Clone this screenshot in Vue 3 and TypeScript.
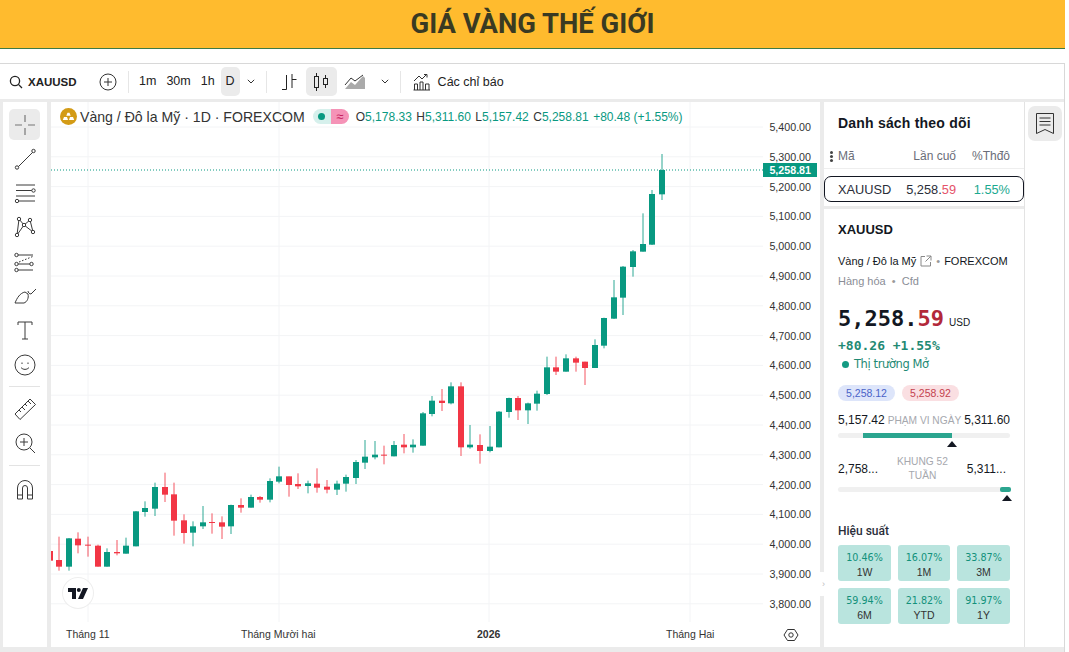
<template>
  <div class="page">
    <header class="banner"><h1>GIÁ VÀNG THẾ GIỚI</h1></header>

    <div class="widget">
      <!-- top toolbar -->
      <div class="toolbar">
        <div class="symbol">
          <svg width="14" height="14" viewBox="0 0 14 14" fill="none" stroke="#222" stroke-width="1.3">
            <circle cx="6" cy="6" r="4.6" /><path d="M9.4 9.4 13 13" />
          </svg>
          <span>XAUUSD</span>
        </div>
        <svg class="add" width="18" height="18" viewBox="0 0 18 18" fill="none" stroke="#333">
          <circle cx="9" cy="9" r="8" /><path d="M9 5v8M5 9h8" />
        </svg>
        <i class="sep first"></i>
        <span class="tf">1m</span>
        <span class="tf">30m</span>
        <span class="tf">1h</span>
        <span class="tf active">D</span>
        <svg class="chev" width="8" height="5" viewBox="0 0 8 5" fill="none" stroke="#333"><path d="M.8.8 4 4 7.2.8" /></svg>
        <i class="sep"></i>
        <svg class="bars" width="16" height="18" viewBox="0 0 16 18" fill="none" stroke="#222">
          <path d="M5.5 2v14.5M1 16.5h4.5M11 1v14M11 6.5h4.5" />
        </svg>
        <div class="tool-on">
          <svg width="16" height="18" viewBox="0 0 16 18" fill="none" stroke="#222">
            <rect x="1.5" y="3.5" width="4" height="11" /><path d="M3.5 0v3.5M3.5 14.5V18" />
            <rect x="10.5" y="5.5" width="4" height="6" /><path d="M12.5 2v3.5M12.5 11.5V15" />
          </svg>
        </div>
        <svg class="area" width="22" height="16" viewBox="0 0 22 16" fill="none" stroke="#333">
          <path d="M1 15 7 8l4 3 8-9 2 2v11H1Z" fill="#aaa" stroke="none" />
          <path d="M1 11 7 4l4 3 8-6" />
        </svg>
        <svg class="chev wide" width="8" height="5" viewBox="0 0 8 5" fill="none" stroke="#333"><path d="M.8.8 4 4 7.2.8" /></svg>
        <i class="sep last"></i>
        <svg class="ind" width="18" height="18" viewBox="0 0 18 18" fill="none" stroke="#333">
          <path d="M1 8 6 3l3 3 4-4" /><path d="M11 1.5h3v3" />
          <path d="M1.5 17v-6h3v6M7 17V9h3v8M12.500 17v-6h3.500v6M.5 17h16.500" />
        </svg>
        <span class="ind-label">Các chỉ báo</span>
      </div>

      <div class="body">
        <!-- drawing tools -->
        <aside class="tools">
          <div class="tool selected">
            <svg width="24" height="24" viewBox="0 0 24 24" fill="none" stroke="#777" stroke-width="1.2">
              <path d="M12 2v7M12 15v7M2 12h7M15 12h7" />
            </svg>
          </div>
          <div v-for="(t, i) in tools" :key="i" class="tool" :class="t.cls">
            <svg width="24" height="24" viewBox="0 0 24 24" fill="none" stroke="#3a3a3a" stroke-width="1">
              <path :d="t.d" />
              <circle v-for="(c, j) in t.dots" :key="j" :cx="c[0]" :cy="c[1]" r="1.700" fill="#fff" />
            </svg>
          </div>
        </aside>

        <!-- chart -->
        <main class="chart">
          <svg class="plot" viewBox="51 102 769 545" width="769" height="545">
            <g stroke="#f3f4f6">
              <line v-for="l in levels" :key="l.label" x1="51" x2="763" :y1="l.y" :y2="l.y" />
              <line v-for="x in gridX" :key="x" :x1="x" :x2="x" y1="102" y2="622" />
            </g>
            <g v-for="c in candles" :key="c.x" :stroke="c.color" :fill="c.color">
              <line :x1="c.x" :x2="c.x" :y1="c.high" :y2="c.low" stroke-opacity="0.85" />
              <rect :x="c.x - 3" :y="c.top" width="6" :height="c.height" stroke="none" />
            </g>
            <line x1="51" x2="763" y1="170" y2="170" stroke="#089981" stroke-dasharray="1 2" />
            <text v-for="l in levels" :key="l.label" class="axis" x="811" :y="l.y + 4" text-anchor="end">{{ l.label }}</text>
            <rect x="763" y="163" width="54" height="14" fill="#089981" />
            <text class="axis tag" x="811" y="174" text-anchor="end">5,258.81</text>
            <text class="time" x="66" y="638">Tháng 11</text>
            <text class="time" x="241" y="638">Tháng Mười hai</text>
            <text class="time strong" x="477" y="638">2026</text>
            <text class="time" x="666" y="638">Tháng Hai</text>
            <path d="M787.500 629.500h7l3.500 5.500-3.500 5.500h-7l-3.500-5.500Z" fill="none" stroke="#333" />
            <circle cx="791" cy="635" r="2.200" fill="none" stroke="#333" />
          </svg>

          <div class="legend">
            <svg width="17" height="17" viewBox="0 0 17 17">
              <circle cx="8.500" cy="8.500" r="8.500" fill="#d39b16" />
              <path d="M6.300 7.800 7.500 4.800h2l1.200 3ZM2.800 12l1.200-3h3l1 3ZM9 12l1-3h3l1.200 3Z" fill="#fff" />
            </svg>
            <span class="legend-name">Vàng / Đô la Mỹ · 1D · FOREXCOM</span>
            <span class="status">
              <span class="status-open"><b></b></span>
              <span class="status-delay">≈</span>
            </span>
            <span class="ohlc">
              <span>O<em>5,178.33</em></span>
              <span>H<em>5,311.60</em></span>
              <span>L<em>5,157.42</em></span>
              <span>C<em>5,258.81</em></span>
              <em>+80.48 (+1.55%)</em>
            </span>
          </div>

          <div class="tv-logo">
            <svg width="20" height="11" viewBox="0 0 20 11" fill="#131722">
              <path d="M0 0h8v11H4V4H0Z" />
              <circle cx="10.800" cy="2" r="2" />
              <path d="M15 0h5l-5 11h-5Z" />
            </svg>
          </div>
        </main>

        <!-- watchlist and details -->
        <section class="side">
          <div class="watch">
            <h2>Danh sách theo dõi</h2>
            <div class="watch-head">
              <span class="dots"></span>
              <span class="col-sym">Mã</span>
              <span class="col-last">Lần cuố</span>
              <span class="col-chg">%Thđô</span>
            </div>
            <div class="watch-row">
              <span class="col-sym">XAUUSD</span>
              <span class="col-last">5,258.<span class="neg">59</span></span>
              <span class="col-chg pos">1.55%</span>
            </div>
          </div>

          <div class="detail">
            <h3>XAUUSD</h3>
            <p class="name">
              Vàng / Đô la Mỹ
              <svg width="12" height="12" viewBox="0 0 12 12" fill="none" stroke="#888">
                <path d="M5 1.500H1v9.500h9.500V7M6.500 1h4.500v4.500M11 1 5.500 6.500" />
              </svg>
              <span class="bullet">•</span> FOREXCOM
            </p>
            <p class="kind">Hàng hóa <span class="bullet">•</span> Cfd</p>
            <div class="price">5,258.<span>59</span><small>USD</small></div>
            <div class="change">+80.26 +1.55%</div>
            <div class="market"><b></b>Thị trường Mở</div>
            <div class="pills">
              <span class="bid">5,258.12</span>
              <span class="ask">5,258.92</span>
            </div>

            <div class="range">
              <span>5,157.42</span>
              <label>PHẠM VI NGÀY</label>
              <span>5,311.60</span>
            </div>
            <div class="bar">
              <i class="fill day"></i>
              <i class="mark day-mark"></i>
            </div>

            <div class="range year">
              <span>2,758...</span>
              <label>KHUNG 52 TUẦN</label>
              <span>5,311...</span>
            </div>
            <div class="bar">
              <i class="fill wk"></i>
              <i class="mark wk-mark"></i>
            </div>

            <h4>Hiệu suất</h4>
            <div class="perf">
              <div v-for="p in perf" :key="p.label" class="perf-card">
                <strong>{{ p.value }}</strong>
                <span>{{ p.label }}</span>
              </div>
            </div>
          </div>

          <button class="collapse" type="button" aria-label="collapse">›</button>
        </section>

        <aside class="strip">
          <div class="strip-btn">
            <svg width="20" height="23" viewBox="0 0 20 23" fill="none" stroke="#333">
              <path d="M1.500 1.500h17v20l-8.500-4-8.500 4Z" />
              <path d="M4.500 6h11M4.500 9.500h11M4.500 13h11" />
            </svg>
          </div>
        </aside>
      </div>
    </div>
  </div>
</template>

<script setup lang="ts">
type Row = [number, number, number, number, 0 | 1]

interface Tool {
  d: string
  dots?: number[][]
  cls?: string
}

const GREEN = '#089981'
const RED = '#f23645'
const STEP = 9.56
const FIRST_X = 49.8

// wick top, body top, body bottom, wick bottom, up — read off the chart in 3x crops
const part1: Row[] = [
  [333, 333, 362, 362, 0], [290, 360, 380, 392, 0], [294, 295, 380, 392, 1], [277, 296, 316, 340, 0],
  [290, 314, 317, 350, 0], [314, 317, 380, 380, 0], [325, 336, 380, 380, 1], [300, 336, 340, 346, 0],
  [293, 317, 341, 341, 1], [213, 214, 319, 319, 1], [184, 204, 216, 230, 1], [128, 141, 206, 228, 1],
  [98, 141, 164, 186, 0], [128, 163, 242, 287, 0], [223, 241, 279, 311, 0], [244, 259, 278, 319, 1],
  [198, 247, 259, 267, 1], [220, 246, 248, 281, 0], [229, 247, 260, 297, 0], [194, 195, 259, 282, 1],
  [175, 195, 203, 218, 0], [164, 171, 203, 203, 1], [168, 171, 179, 188, 0], [115, 123, 179, 187, 1]
]
const part2: Row[] = [
  [290, 319, 335, 340, 1], [320, 319, 345, 380, 0], [310, 342, 349, 357, 0],
  [332, 340, 348, 370, 1], [295, 341, 353, 368, 0], [330, 350, 359, 370, 0], [332, 341, 359, 375, 1],
  [314, 321, 341, 365, 1], [270, 276, 324, 342, 1], [210, 260, 278, 297, 1], [213, 254, 262, 268, 1],
  [227, 254, 257, 283, 0], [213, 225, 259, 259, 1], [192, 224, 232, 250, 0], [208, 224, 232, 248, 1],
  [126, 130, 227, 227, 1], [78, 92, 132, 139, 1], [57, 92, 99, 123, 0], [37, 49, 100, 103, 1],
  [37, 49, 232, 258, 0], [165, 224, 232, 236, 1], [193, 225, 243, 281, 0], [168, 230, 243, 247, 1],
  [123, 125, 232, 232, 1], [83, 84, 126, 143, 1], [78, 84, 121, 150, 0], [98, 100, 121, 162, 1],
  [62, 71, 101, 122, 1]
]
const part3: Row[] = [
  [650, 682, 762, 765, 1], [650, 682, 695, 705, 0], [643, 655, 695, 695, 1], [650, 655, 668, 695, 0],
  [665, 665, 684, 735, 0], [598, 615, 684, 684, 1], [533, 534, 617, 625, 1], [420, 472, 536, 537, 1],
  [378, 380, 473, 525, 1], [330, 334, 381, 410, 1], [220, 312, 335, 335, 1], [150, 162, 314, 315, 1],
  [42, 90, 163, 180, 1]
]

const rows = [
  ...part1.map((r) => ({ r, base: 440 })),
  ...part2.map((r) => ({ r, base: 370 })),
  ...part3.map((r) => ({ r, base: 140 }))
]

const candles = rows.map(({ r, base }, i) => {
  const at = (z: number) => base + z / 3
  return {
    x: Math.round(FIRST_X + i * STEP),
    high: at(r[0]),
    top: at(r[1]),
    height: Math.max((r[2] - r[1]) / 3, 1),
    low: at(r[3]),
    color: r[4] ? GREEN : RED
  }
})

const levels = Array.from({ length: 17 }, (_, i) => ({
  label: (5400 - i * 100).toLocaleString('en-US') + '.00',
  y: 127 + i * 29.8
}))

const gridX = [88, 279, 489, 690]

const tools: Tool[] = [
  { d: 'M5 20 20 5', dots: [[4, 20.500], [20.500, 4]] },
  { d: 'M3 4h19M3 9.500h16M3 15h19M6 20h16', dots: [[20.500, 9.500], [4, 20]] },
  {
    d: 'M4 20 6 4l5 6 6-5 3 12-9-7-7 10',
    dots: [[4, 20], [6, 4], [17, 5], [11, 10], [20, 17]]
  },
  {
    d: 'M5 5h15M5 14h12M5 20h15M6 12l1.500-.6M9 10.800l1.500-.6M12 9.600l1.500-.6M15 8.400l1.500-.6M18 7.200l1.500-.6',
    dots: [[3.500, 5], [3.500, 14], [3.500, 20], [18.500, 14]]
  },
  { d: 'M2 19h9c3-1 5-5 4-9l-3-2c-5 1-8 6-10 11ZM15 7c0 1.500 1.500 3 3 3l5-5' },
  { d: 'M5 7V4h14v3M12 4v17M9 21h6' },
  { d: 'M12 2a10 10 0 1 0 0 20 10 10 0 0 0 0-20ZM8 14.500c2 2.500 6 2.500 8 0M9 9.500v1.500M15 9.500v1.500', cls: 'after-gap' },
  { d: 'M2 17 17 2l5.500 5.500L7 22.500ZM6 13l2 2M9 10l3 3M12 7l2 2M15 4l3 3' },
  { d: 'M11 3a8 8 0 1 0 0 16 8 8 0 0 0 0-16ZM17 17l5 5M11 7v8M7 11h8' },
  {
    d: 'M4.500 22V11a7.500 7.500 0 0 1 15 0v11h-5V11a2.500 2.500 0 0 0-5 0v11ZM4.500 18h5M14.500 18h5',
    cls: 'magnet'
  }
]

const perf = [
  { value: '10.46%', label: '1W' },
  { value: '16.07%', label: '1M' },
  { value: '33.87%', label: '3M' },
  { value: '59.94%', label: '6M' },
  { value: '21.82%', label: 'YTD' },
  { value: '91.97%', label: '1Y' }
]
</script>

<style>
html, body {
  background: #fff;
}
</style>

<style scoped>
.page {
  width: 1065px;
  height: 652px;
  overflow: hidden;
  font-family: "Liberation Sans", Arial, sans-serif;
  color: #131722;
}

.banner {
  height: 48px;
  background: #ffbb2e;
  border-bottom: 1px solid #3f7a45;
  display: flex;
  align-items: center;
  justify-content: center;
}
.banner h1 {
  margin: 0;
  font-family: Roboto, "Liberation Sans", sans-serif;
  font-size: 27.400px;
  font-weight: 700;
  color: #3a3a22;
}

.widget {
  margin-top: 14px;
  height: 589px;
  background: #ebebeb;
  border-right: 1px solid #d8d8d8;
  display: flex;
  flex-direction: column;
}

.toolbar {
  height: 35px;
  background: #fff;
  border-top: 1px solid #d8d8d8;
  display: flex;
  align-items: center;
  font-size: 12.500px;
  color: #222;
  flex: none;
}
.symbol {
  display: flex;
  align-items: center;
  gap: 5px;
  margin-left: 9px;
  font-weight: 700;
  font-size: 11.500px;
  width: 90px;
}
.sep {
  width: 1px;
  height: 22px;
  background: #e6e6e6;
  margin: 0 9px;
}
.sep.first { margin: 0 5px 0 11px; }
.sep.last { margin: 0 7px; }
.tf {
  padding: 0 5px;
  line-height: 29px;
  height: 29px;
}
.tf.active {
  background: #ebebeb;
  border-radius: 5px;
  width: 19px;
  padding: 0;
  text-align: center;
  margin-left: 1px;
}
.chev { margin: 0 2px 0 7px; }
.chev.wide { margin: 0 4px 0 15px; }
.bars { margin-left: 5px; }
.tool-on {
  width: 31px;
  height: 29px;
  margin-left: 9px;
  background: #ebebeb;
  border-radius: 5px;
  display: flex;
  align-items: center;
  justify-content: center;
}
.area { margin-left: 7px; }
.ind { margin-left: 5px; }
.ind-label { margin-left: 7px; }

.body {
  flex: 1;
  min-height: 0;
  margin-top: 3px;
  display: flex;
  margin-left: 3px;
  height: 545px;
}

.tools {
  width: 44px;
  height: 545px;
  background: #fff;
  display: flex;
  flex-direction: column;
  align-items: center;
  flex: none;
  padding: 7px 1px 0 0;
  box-sizing: border-box;
}
.tool {
  width: 31px;
  height: 31px;
  margin-bottom: 3.300px;
  display: flex;
  align-items: center;
  justify-content: center;
  position: relative;
}
.tool.selected {
  background: #ebebeb;
  border-radius: 5px;
}
.tool.after-gap { margin-bottom: 13px; }
.tool.magnet { margin-top: 11.700px; }
.tool.magnet::before,
.tool.after-gap::after {
  content: "";
  position: absolute;
  left: 0;
  width: 31px;
  height: 1px;
  background: #e3e3e3;
}
.tool.magnet::before { top: -8px; }
.tool.after-gap::after { bottom: -7px; }

.chart {
  position: relative;
  width: 769px;
  height: 545px;
  margin-left: 4px;
  background: #fff;
  flex: none;
}
.plot { display: block; }
.axis {
  font: 10.700px "Liberation Sans", Arial, sans-serif;
  fill: #333;
}
.axis.tag {
  font-weight: 700;
  fill: #fff;
}
.time {
  font: 10.500px "Liberation Sans", Arial, sans-serif;
  fill: #333;
}
.time.strong {
  font-weight: 700;
}

.legend {
  position: absolute;
  left: 9px;
  top: 6px;
  display: flex;
  align-items: center;
  height: 17px;
  color: #333;
}
.legend-name {
  margin-left: 3px;
  font-size: 14.100px;
  white-space: nowrap;
}
.status {
  display: flex;
  margin-left: 8px;
  height: 15px;
  width: 36px;
  border-radius: 8px;
  overflow: hidden;
}
.status-open {
  width: 18px;
  background: #d6f0ec;
  display: flex;
  align-items: center;
  justify-content: center;
}
.status-open b {
  width: 7px;
  height: 7px;
  border-radius: 50%;
  background: #089981;
}
.status-delay {
  flex: 1;
  background: #f593b7;
  color: #c2185b;
  text-align: center;
  font-size: 13px;
  line-height: 15px;
}
.ohlc {
  display: flex;
  gap: 4.500px;
  margin-left: 7px;
  font-size: 12px;
  white-space: nowrap;
}
.ohlc em {
  font-style: normal;
  color: #089981;
}

.tv-logo {
  position: absolute;
  left: 12px;
  top: 476px;
  width: 30px;
  height: 30px;
  border-radius: 50%;
  background: #fff;
  box-shadow: 0 0 0 1px #eee;
  display: flex;
  align-items: center;
  justify-content: center;
}

.side {
  position: relative;
  width: 200px;
  margin-left: 4px;
  flex: none;
  display: flex;
  flex-direction: column;
  gap: 3px;
  height: 545px;
}
.watch {
  background: #fff;
  height: 104px;
  flex: none;
}
.watch h2 {
  margin: 0;
  padding: 13px 0 0 14px;
  font-size: 14px;
  line-height: 16px;
  font-weight: 700;
  letter-spacing: 0.2px;
}
.watch-head,
.watch-row {
  position: relative;
  display: grid;
  grid-template-columns: 50px 68px 54px;
  align-items: center;
  font-size: 12px;
}
.watch-head {
  margin-top: 13px;
  height: 25px;
  padding-left: 14px;
  color: #6a6d78;
  border-bottom: 1px solid #eee;
  box-sizing: border-box;
}
.dots {
  position: absolute;
  left: 6px;
  top: 7px;
  width: 3px;
  height: 3px;
  border-radius: 50%;
  background: #444;
  box-shadow: 0 4px 0 #444, 0 8px 0 #444;
}
.col-last,
.col-chg {
  text-align: right;
}
.watch-row {
  height: 26px;
  margin-top: 7px;
  padding-left: 13px;
  border: 1px solid #131722;
  border-radius: 7px;
  font-size: 12.800px;
  box-sizing: border-box;
  color: #2a2e39;
}
.neg { color: #e5536a; }
.pos { color: #1ba98f; }

.detail {
  flex: 1;
  min-height: 0;
  background: #fff;
  padding: 13px 14px 0;
  overflow: hidden;
}
.detail h3 {
  margin: 0;
  font-size: 13px;
  line-height: 15px;
  font-weight: 700;
}
.name {
  margin: 17px 0 0;
  font-size: 11px;
  line-height: 14px;
  white-space: nowrap;
  display: flex;
  align-items: center;
  gap: 4px;
}
.bullet { color: #999; margin: 0 3px; }
.name .bullet { margin: 0; }
.kind {
  margin: 6px 0 0;
  font-size: 11px;
  line-height: 14px;
  color: #8a8d96;
}
.price {
  margin-top: 16px;
  font-family: "DejaVu Sans Mono", monospace;
  font-weight: 700;
  font-size: 22px;
  line-height: 30px;
  white-space: nowrap;
}
.price span { color: #b2283a; }
.price small {
  margin-left: 5px;
  font: 400 10px "Liberation Sans", Arial, sans-serif;
}
.change {
  margin-top: 4px;
  font-family: "DejaVu Sans Mono", monospace;
  font-weight: 700;
  font-size: 13px;
  line-height: 16px;
  color: #1f8a74;
  white-space: pre;
}
.market {
  margin-top: 3px;
  display: flex;
  align-items: center;
  font-size: 11.500px;
  line-height: 15px;
  color: #1f8a74;
  font-family: "DejaVu Sans", sans-serif;
  letter-spacing: -0.4px;
}
.market b {
  width: 7px;
  height: 7px;
  border-radius: 50%;
  background: #139a82;
  margin: 0 5px 0 4px;
}
.pills {
  display: flex;
  gap: 7px;
  margin-top: 13px;
  font-size: 10.500px;
}
.pills span {
  height: 16px;
  line-height: 16px;
  width: 57px;
  text-align: center;
  border-radius: 8px;
}
.bid { background: #dde5fa; color: #4a63c8; }
.ask { background: #fadfe2; color: #c4424f; }
.range {
  display: flex;
  align-items: center;
  justify-content: space-between;
  margin-top: 12px;
  font-size: 12px;
  line-height: 15px;
  width: 172px;
  white-space: nowrap;
}
.range label {
  font-size: 10.200px;
  color: #a6a8ae;
  text-align: center;
}
.range.year {
  margin-top: 16px;
  height: 30px;
}
.range.year span:last-child { padding-right: 4px; }
.range.year label {
  width: 66px;
  white-space: normal;
  line-height: 14px;
}
.bar {
  position: relative;
  height: 5px;
  width: 172px;
  margin-top: 5px;
  background: #f0f0f0;
  border-radius: 3px;
}
.range.year + .bar { margin-top: 3px; }
.fill {
  position: absolute;
  top: 0;
  height: 5px;
  background: #2ba58f;
}
.fill.day { left: 25px; width: 89px; }
.fill.wk { left: 162px; width: 11px; border-radius: 2px; }
.mark {
  position: absolute;
  top: 8px;
  width: 0;
  height: 0;
  border-left: 5px solid transparent;
  border-right: 5px solid transparent;
  border-bottom: 6px solid #131722;
}
.mark.day-mark { left: 109px; }
.mark.wk-mark { left: 164px; }
.detail h4 {
  margin: 31px 0 0;
  font-family: Roboto, "Liberation Sans", sans-serif;
  font-size: 12px;
  line-height: 16px;
  font-weight: 500;
  color: #2a2e39;
}
.perf {
  display: grid;
  grid-template-columns: 53px 52px 53px;
  column-gap: 7px;
  row-gap: 7px;
  margin-top: 6px;
}
.perf-card {
  height: 36px;
  padding-top: 3px;
  box-sizing: border-box;
  background: #b9e4de;
  border-radius: 3px;
  display: flex;
  flex-direction: column;
  align-items: center;
  justify-content: center;
}
.perf-card strong {
  font-family: "DejaVu Sans", sans-serif;
  font-weight: 400;
  font-size: 9.600px;
  line-height: 15px;
  color: #12917b;
}
.perf-card span {
  font-size: 10.500px;
  line-height: 14px;
  color: #333;
}
.collapse {
  position: absolute;
  left: -4px;
  top: 470px;
  width: 7px;
  height: 24px;
  padding: 0;
  border: none;
  border-radius: 0 4px 4px 0;
  background: #fff;
  color: #bbb;
  font-size: 9px;
  line-height: 24px;
}

.strip {
  flex: 1;
  background: #fff;
  border-left: 1px solid #e3e3e3;
  height: 545px;
  padding: 4px 0 0 3px;
  box-sizing: border-box;
}
.strip-btn {
  width: 34px;
  height: 35px;
  background: #ebebeb;
  border-radius: 7px;
  display: flex;
  align-items: center;
  justify-content: center;
}
</style>
